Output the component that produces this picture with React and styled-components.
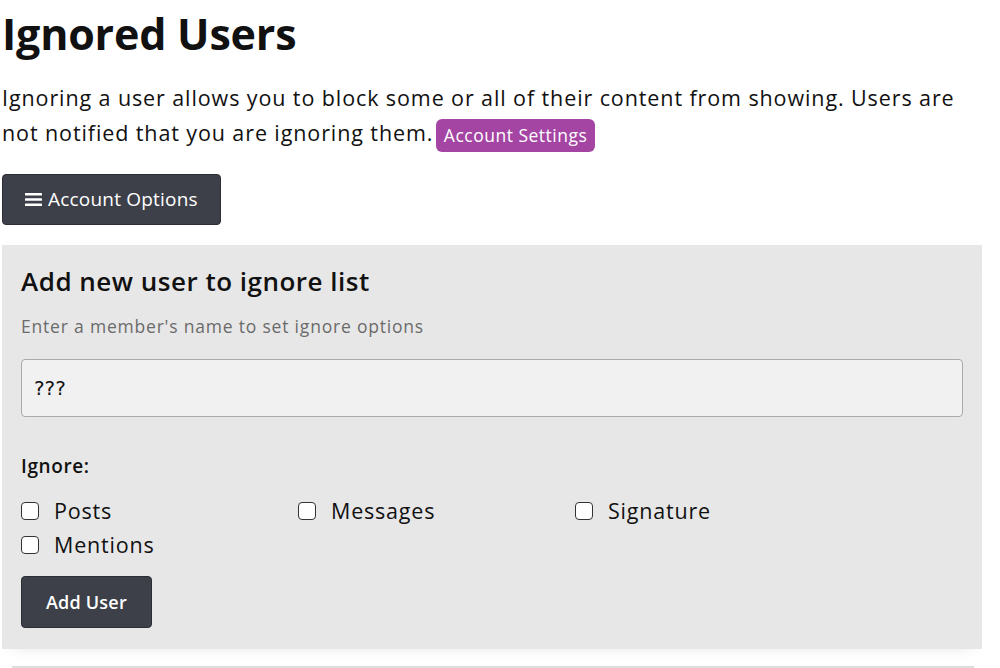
import React from "react";
import styled, { createGlobalStyle } from "styled-components";

const Global = createGlobalStyle`
  html, body { margin: 0; padding: 0; background: #fff; }
  body { font-family: "Open Sans", "Noto Sans", sans-serif; color: #111; overflow: hidden; }
  * { box-sizing: border-box; }
`;

const Page = styled.div`
  padding: 0 18px 0 2px;
`;

const Title = styled.h1`
  margin: 0;
  padding-top: 6px;
  font-size: 43px;
  font-weight: 700;
  line-height: 56px;
  letter-spacing: -0.2px;
`;

const Intro = styled.p`
  margin: 18px 0 0;
  font-size: 21.5px;
  line-height: 35px;
  letter-spacing: 0.9px;
`;

const Badge = styled.a`
  display: inline-block;
  background: #a445a3;
  color: #fff;
  font-size: 17.5px;
  line-height: 33px;
  padding: 0 8px;
  border-radius: 6px;
  margin-left: -4px;
  letter-spacing: 0.5px;
  text-decoration: none;
  vertical-align: middle;
`;

const DarkButton = styled.button`
  display: inline-flex;
  align-items: center;
  gap: 6px;
  height: ${(p) => p.h}px;
  padding: 0 ${(p) => p.px}px;
  background: #3d4049;
  color: #fff;
  border: 1px solid #2c2e35;
  border-radius: 4px;
  font-family: inherit;
  font-size: ${(p) => p.fs}px;
  font-weight: ${(p) => p.fw};
  letter-spacing: 0.2px;
  cursor: pointer;
`;

const OptionsRow = styled.div`
  margin-top: 22px;
`;

const Panel = styled.section`
  margin-top: 20px;
  background: #e7e7e7;
  padding: 19px 19px 21px;
  box-shadow: 0 8px 14px -10px rgba(0,0,0,0.12);
`;

const PanelTitle = styled.h2`
  margin: 0;
  font-size: 26px;
  font-weight: 600;
  line-height: 34px;
  letter-spacing: 0.5px;
`;

const Hint = styled.p`
  margin: 15px 0 0;
  color: #6b6b6b;
  font-size: 17.5px;
  line-height: 26px;
  letter-spacing: 0.8px;
`;

const Input = styled.input`
  display: block;
  width: 100%;
  margin-top: 20px;
  height: 58px;
  padding: 0 12px;
  background: #f1f1f1;
  border: 1px solid #aaa;
  border-radius: 4px;
  font-family: "DejaVu Sans", sans-serif;
  font-size: 20px;
  color: #111;
  outline: none;
`;

const Label = styled.div`
  margin-top: 36px;
  font-size: 19px;
  font-weight: 600;
  line-height: 26px;
  letter-spacing: 0.6px;
`;

const CheckGrid = styled.div`
  margin-top: 15px;
  display: grid;
  grid-template-columns: repeat(3, 277px);
`;

const CheckItem = styled.label`
  display: flex;
  align-items: center;
  height: 34px;
  font-size: 21.5px;
  letter-spacing: 0.8px;
  gap: 15px;
`;

const Box = styled.input`
  appearance: none;
  margin: 0;
  width: 18px;
  height: 18px;
  border: 1.5px solid #333;
  border-radius: 4px;
  background: #fff;
`;

const Actions = styled.div`
  margin-top: 14px;
`;

const NextBlock = styled.div`
  margin: 17px 8px 0 10px;
  border-top: 2px solid #dedede;
  height: 20px;
`;

const Bars = () => (
  <svg width="17" height="15" viewBox="0 0 17 15">
    <rect x="0" y="1" width="17" height="2.6" rx="0.6" fill="#fff" />
    <rect x="0" y="6.2" width="17" height="2.6" rx="0.6" fill="#fff" />
    <rect x="0" y="11.4" width="17" height="2.6" rx="0.6" fill="#fff" />
  </svg>
);

export default function App() {
  const opts = ["Posts", "Messages", "Signature", "Mentions"];
  return (
    <>
      <Global />
      <Page>
        <Title>Ignored Users</Title>
        <Intro>
          Ignoring a user allows you to block some or all of their content from showing. Users are
          not notified that you are ignoring them. <Badge href="#">Account Settings</Badge>
        </Intro>
        <OptionsRow>
          <DarkButton h={51} px={22} fs={19} fw={500}>
            <Bars /> Account Options
          </DarkButton>
        </OptionsRow>
        <Panel>
          <PanelTitle>Add new user to ignore list</PanelTitle>
          <Hint>Enter a member's name to set ignore options</Hint>
          <Input defaultValue="???" />
          <Label>Ignore:</Label>
          <CheckGrid>
            {opts.map((o) => (
              <CheckItem key={o}>
                <Box type="checkbox" />
                {o}
              </CheckItem>
            ))}
          </CheckGrid>
          <Actions>
            <DarkButton h={52} px={24} fs={18} fw={600}>Add User</DarkButton>
          </Actions>
        </Panel>
        <NextBlock />
      </Page>
    </>
  );
}
